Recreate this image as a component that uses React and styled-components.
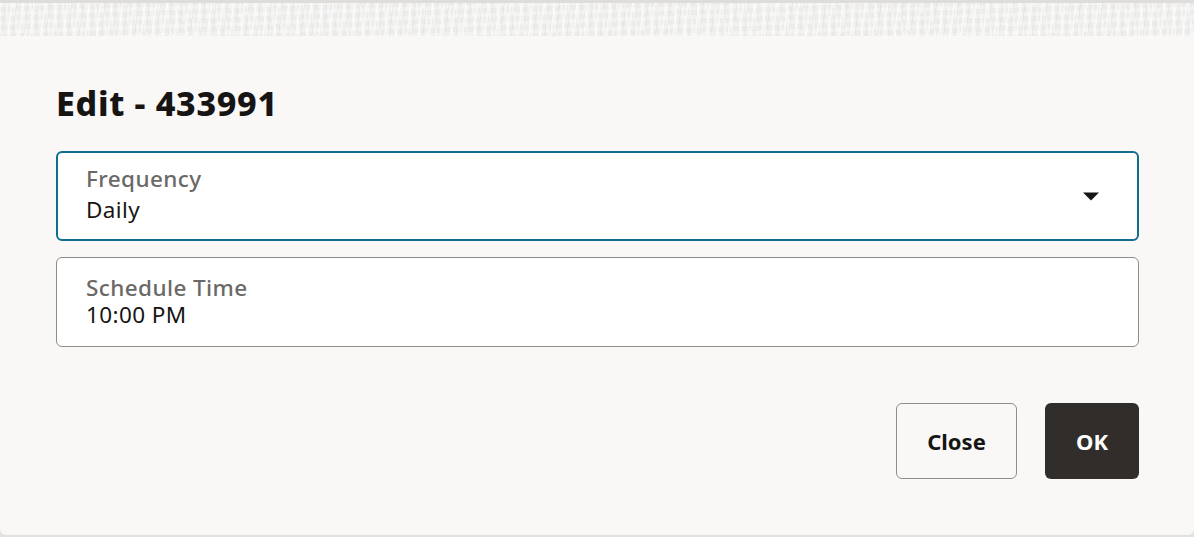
import React from "react";
import styled, { createGlobalStyle } from "styled-components";

const Global = createGlobalStyle`
  html, body { margin: 0; padding: 0; }
  body {
    background: #e2e1df;
    font-family: "Noto Sans", "Open Sans", sans-serif;
    color: #161513;
  }
  * { box-sizing: border-box; }
`;

const Page = styled.div`
  width: 1194px;
  height: 537px;
  display: flex;
  flex-direction: column;
  overflow: hidden;
`;

const Backdrop = styled.div`
  height: 36px;
  flex: none;
  background-color: #edeceb;
  background-image:
    repeating-linear-gradient(97deg, rgba(255,255,255,0.5) 0 2px, transparent 2px 5px, rgba(214,213,211,0.3) 5px 6px, transparent 6px 11px),
    repeating-linear-gradient(84deg, rgba(255,255,255,0.35) 0 3px, transparent 3px 8px),
    repeating-linear-gradient(178deg, rgba(255,255,255,0.3) 0 4px, transparent 4px 9px);
  border-top: 3px solid #dedddb;
`;

const Dialog = styled.div`
  flex: none;
  height: 499px;
  background: #f9f8f6;
  border-radius: 0 0 6px 6px;
  padding: 47px 55px 56px 56px;
  display: flex;
  flex-direction: column;
`;

const Title = styled.h1`
  margin: 0 0 28px;
  font-size: 34px;
  line-height: 40px;
  font-weight: 800;
  letter-spacing: 0.7px;
  color: #161513;
`;

const Fields = styled.div`
  display: flex;
  flex-direction: column;
  gap: 16px;
`;

const Field = styled.div`
  height: 90px;
  background: #ffffff;
  border: ${(p) => (p.$focused ? "2px solid #116d90" : "1px solid #8f8d8b")};
  border-radius: 6px;
  padding: ${(p) => (p.$focused ? "0 28px" : "0 29px")};
  display: flex;
  align-items: center;
`;

const FieldText = styled.div`
  flex: 1;
  display: flex;
  flex-direction: column;
  align-self: flex-start;
  padding-top: ${(p) => p.$top}px;
`;

const Label = styled.div`
  font-size: 22.5px;
  line-height: 27px;
  font-weight: 500;
  letter-spacing: 0.4px;
  color: #6b6967;
`;

const Value = styled.div`
  font-size: 22.5px;
  line-height: 28px;
  letter-spacing: 0.4px;
  margin-top: ${(p) => p.$gap}px;
  color: #161513;
`;

const Caret = styled.svg`
  width: 18px;
  height: 10px;
  margin-right: 9px;
  flex: none;
`;

const Actions = styled.div`
  margin-top: auto;
  display: flex;
  justify-content: flex-end;
  gap: 28px;
`;

const Button = styled.button`
  height: 76px;
  min-width: ${(p) => (p.$primary ? 94 : 121)}px;
  padding: 0 24px;
  border-radius: 6px;
  border: ${(p) => (p.$primary ? "none" : "1.5px solid #8f8d8b")};
  background: ${(p) => (p.$primary ? "#312d2a" : "transparent")};
  color: ${(p) => (p.$primary ? "#ffffff" : "#161513")};
  font-family: "Noto Sans", "Open Sans", sans-serif;
  font-size: 22px;
  font-weight: 700;
  cursor: pointer;
`;

export default function App() {
  return (
    <>
      <Global />
      <Page>
        <Backdrop />
        <Dialog>
          <Title>Edit - 433991</Title>
          <Fields>
            <Field $focused>
              <FieldText $top={12}>
                <Label>Frequency</Label>
                <Value $gap={4}>Daily</Value>
              </FieldText>
              <Caret viewBox="0 0 18 10">
                <path d="M1 1.5h16l-8 8z" fill="#161513" />
              </Caret>
            </Field>
            <Field>
              <FieldText $top={16}>
                <Label>Schedule Time</Label>
                <Value $gap={0}>10:00 PM</Value>
              </FieldText>
            </Field>
          </Fields>
          <Actions>
            <Button>Close</Button>
            <Button $primary>OK</Button>
          </Actions>
        </Dialog>
      </Page>
    </>
  );
}
